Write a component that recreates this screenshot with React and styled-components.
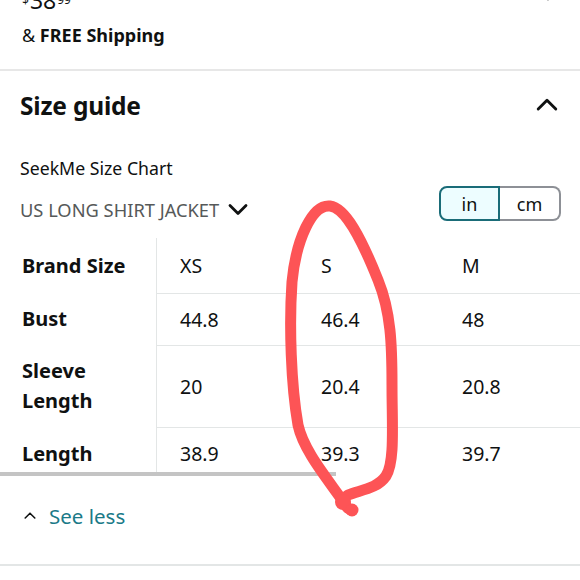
import React from "react";
import styled, { createGlobalStyle } from "styled-components";

const Global = createGlobalStyle`
  html, body { margin: 0; padding: 0; background: #fff; }
  body { font-family: "Noto Sans", "Liberation Sans", sans-serif; color: #0f1111; }
`;

const Page = styled.div`
  position: relative;
  width: 580px;
  height: 580px;
  overflow: hidden;
  background: #fff;
`;

const Top = styled.section`
  padding: 0 22px 0 22px;
  margin-top: -15px;
  height: 84px;
  box-sizing: border-box;
`;

const PriceRow = styled.div`
  display: flex;
  justify-content: space-between;
  align-items: center;
  height: 30px;
`;

const Price = styled.div`
  display: flex;
  align-items: flex-start;
  gap: 1px;
  line-height: 1;
  color: #0f1111;
`;

const Sup = styled.span`
  font-size: 12px;
  margin-top: 5px;
`;

const Big = styled.span`
  font-size: 23px;
`;

const Arrow = styled.span`
  display: flex;
  align-self: flex-start;
  margin-top: -4px;
`;

const Shipping = styled.div`
  margin-top: 8px;
  font-size: 18px;
  line-height: 24px;
  b { font-weight: 700; }
`;

const Divider = styled.div`
  height: 2px;
  background: #e7e7e7;
`;

const Guide = styled.section`
  padding: 19px 20px 0 20px;
`;

const GuideHead = styled.div`
  display: flex;
  justify-content: space-between;
  align-items: center;
  height: 30px;
  padding-right: 2px;
`;

const GuideTitle = styled.h2`
  margin: 0;
  font-size: 24.5px;
  font-weight: 700;
  letter-spacing: -0.2px;
`;

const ChartName = styled.div`
  margin-top: 36px;
  font-size: 17.7px;
  line-height: 24px;
`;

const FilterRow = styled.div`
  display: flex;
  justify-content: space-between;
  align-items: flex-start;
  margin-top: -3px;
  height: 61px;
`;

const Fit = styled.div`
  display: flex;
  align-items: center;
  gap: 9px;
  margin-top: 21px;
  font-size: 18.3px;
  line-height: 24px;
  color: #565959;
`;

const Toggle = styled.div`
  display: flex;
  margin-top: 9px;
  margin-right: -1px;
`;

const Seg = styled.div`
  width: 61px;
  height: 35px;
  box-sizing: border-box;
  display: flex;
  align-items: center;
  justify-content: center;
  font-size: 18px;
  color: #0f1111;
  background: ${(p) => (p.$active ? "#edfdff" : "#fff")};
  border: 2px solid ${(p) => (p.$active ? "#1a6c78" : "#8d9096")};
  border-radius: ${(p) => (p.$first ? "8px 0 0 8px" : "0 8px 8px 0")};
  ${(p) => (p.$first ? "" : "border-left: none;")}
`;

const TableWrap = styled.div`
  width: 580px;
  overflow: hidden;
`;

const Grid = styled.div`
  display: grid;
  grid-template-columns: 157px repeat(3, 141px);
  grid-template-rows: 55px 52px 82px 45px;
`;

const Label = styled.div`
  display: flex;
  align-items: center;
  padding-left: 22px;
  padding-top: ${(p) => (p.$last ? "8px" : "0")};
  font-size: 20px;
  font-weight: 700;
  line-height: 30px;
  border-right: 1px solid #e3e6e6;
`;

const Cell = styled.div`
  display: flex;
  align-items: center;
  padding-left: 23px;
  font-size: 19.5px;
  border-top: ${(p) => (p.$first ? "none" : "1.5px solid #e3e6e6")};
  padding-top: ${(p) => (p.$last ? "6px" : "0")};
`;

const Scroll = styled.div`
  width: 336px;
  height: 4px;
  background: #c4c4c4;
`;

const SeeLess = styled.div`
  display: flex;
  align-items: center;
  gap: 13px;
  padding: 19px 0 0 24px;
  height: 60px;
  box-sizing: border-box;
  font-size: 20.5px;
  color: #1b7a88;
`;

const Bottom = styled.div`
  margin-top: 28px;
  height: 1.5px;
  background: #e3e6e6;
`;

const Mark = styled.svg`
  position: absolute;
  left: 0;
  top: 0;
  pointer-events: none;
`;

const sizes = ["XS", "S", "M"];
const rows = [
  { label: "Bust", vals: ["44.8", "46.4", "48"] },
  { label: <>Sleeve<br />Length</>, vals: ["20", "20.4", "20.8"] },
  { label: "Length", vals: ["38.9", "39.3", "39.7"] },
];

const ChevDown = () => (
  <svg width="20" height="14" viewBox="0 0 20 14" fill="none">
    <path d="M2 2.5 L10 10.5 L18 2.5" stroke="#0f1111" strokeWidth="2.8" strokeLinecap="round" strokeLinejoin="round" />
  </svg>
);

const ChevUp = ({ size = 20, w = 2.6 }) => (
  <svg width={size} height={size * 0.6} viewBox="0 0 20 12" fill="none">
    <path d="M2 10 L10 2 L18 10" stroke="#0f1111" strokeWidth={w} strokeLinecap="round" strokeLinejoin="round" />
  </svg>
);

const ChevRight = () => (
  <svg width="12" height="20" viewBox="0 0 12 20" fill="none">
    <path d="M2 2 L10 10 L2 18" stroke="#0f1111" strokeWidth="2.6" strokeLinecap="round" strokeLinejoin="round" />
  </svg>
);

export default function App() {
  return (
    <Page>
      <Global />
      <Top>
        <PriceRow>
          <Price>
            <Sup>$</Sup>
            <Big>38</Big>
            <Sup>99</Sup>
          </Price>
          <Arrow>
            <ChevRight />
          </Arrow>
        </PriceRow>
        <Shipping>
          &amp; <b>FREE Shipping</b>
        </Shipping>
      </Top>
      <Divider />
      <Guide>
        <GuideHead>
          <GuideTitle>Size guide</GuideTitle>
          <ChevUp size={22} w={2.6} />
        </GuideHead>
        <ChartName>SeekMe Size Chart</ChartName>
        <FilterRow>
          <Fit>
            US LONG SHIRT JACKET <ChevDown />
          </Fit>
          <Toggle>
            <Seg $active $first>in</Seg>
            <Seg>cm</Seg>
          </Toggle>
        </FilterRow>
      </Guide>
      <TableWrap>
        <Grid>
          <Label>Brand Size</Label>
          {sizes.map((s) => (
            <Cell key={s} $first>{s}</Cell>
          ))}
          {rows.map((r, i) => {
            const last = i === rows.length - 1;
            return (
              <React.Fragment key={i}>
                <Label $last={last}>{r.label}</Label>
                {r.vals.map((v, j) => (
                  <Cell key={j} $last={last}>{v}</Cell>
                ))}
              </React.Fragment>
            );
          })}
        </Grid>
      </TableWrap>
      <Scroll />
      <SeeLess>
        <ChevUp size={12} w={2.6} />
        See less
      </SeeLess>
      <Bottom />
      <Mark width="580" height="580" viewBox="0 0 580 580">
        <path
          d="M340 497 C322 472 303 448 298 425 C291 385 289 325 292 282 C296 240 312 204 330 206 C346 208 362 240 378 280 C391 312 392 345 392 385 C392 425 395 462 386 476 C377 489 360 490 348 495 C341 499 346 510 352 510"
          fill="none"
          stroke="#fd5456"
          strokeWidth="11"
          strokeLinecap="round"
          strokeLinejoin="round"
        />
        <circle cx="343" cy="502" r="8" fill="#fd5456" />
        <circle cx="352" cy="510" r="6.5" fill="#fd5456" />
      </Mark>
    </Page>
  );
}
